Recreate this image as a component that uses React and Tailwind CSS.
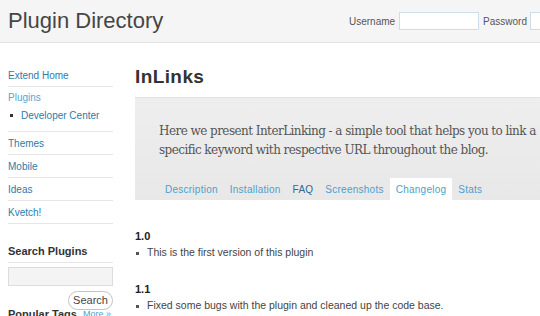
const navItems = ['Themes', 'Mobile', 'Ideas', 'Kvetch!'];

const tabs = [
  { label: 'Description', color: 'text-[#4d9fcd]' },
  { label: 'Installation', color: 'text-[#4d9fcd]' },
  { label: 'FAQ', color: 'text-[#2a6a94]' },
  { label: 'Screenshots', color: 'text-[#4d9fcd]' },
  { label: 'Changelog', color: 'text-[#4d9fcd]', active: true },
  { label: 'Stats', color: 'text-[#4d9fcd]' },
];

const changelog = [
  { version: '1.0', notes: ['This is the first version of this plugin'] },
  { version: '1.1', notes: ['Fixed some bugs with the plugin and cleaned up the code base.'] },
];

const App = () => {
  return (
    <div className="w-[540px] h-[316px] overflow-hidden bg-white font-['Liberation_Sans',Arial,sans-serif]">
      <div className="w-[640px]">
        {/* Header */}
        <div className="h-[43px] bg-[#f5f5f5] border-b border-[#e3e3e3] flex items-center justify-between pl-2 pr-[30px]">
          <h1 className="text-[22px] leading-none text-[#464646] mb-[1px]">Plugin Directory</h1>
          <div className="flex items-center text-[10px] text-[#555]">
            <span className="mr-1">Username</span>
            <input className="w-[80px] h-[18px] border border-[#cfdceb] bg-white mr-1" />
            <span className="mr-[3px]">Password</span>
            <input className="w-[80px] h-[18px] border border-[#cfdceb] bg-white" />
          </div>
        </div>

        <div className="flex pl-2">
          {/* Sidebar */}
          <div className="w-[105px] pt-[21px] text-[10px]">
            <div className="h-[23px] flex items-center border-b border-[#e6e6e6] text-[#2b7bab]">Extend Home</div>
            <div className="border-b border-[#e6e6e6] pb-[9px]">
              <div className="h-[21px] flex items-center text-[#5aa5d2]">Plugins</div>
              <div className="h-[14px] flex items-center pl-[2px] text-[#2b7bab]">
                <span className="w-[3px] h-[3px] bg-[#333] mr-[8px]"></span>
                Developer Center
              </div>
            </div>
            {navItems.map((item) => (
              <div key={item} className="h-[23px] flex items-center border-b border-[#e6e6e6] text-[#2b7bab]">
                {item}
              </div>
            ))}

            <div className="mt-[16px] h-[23px] flex items-center border-b border-[#e6e6e6] text-[11px] font-bold text-[#333]">
              Search Plugins
            </div>
            <input className="mt-[4px] w-[105px] h-[19px] border border-[#dcdcdc] bg-[#f4f4f4] block" />
            <div className="flex justify-end mt-[5px]">
              <button className="w-[45px] h-[19px] rounded-full border border-[#c4c4c4] bg-white text-[11px] text-[#444] leading-none">
                Search
              </button>
            </div>
            <div className="flex items-center justify-between -mt-[4px] pr-[2px]">
              <span className="text-[11px] font-bold text-[#333]">Popular Tags</span>
              <span className="text-[9px] text-[#4d9fcd]">More »</span>
            </div>
          </div>

          {/* Main */}
          <div className="ml-[22px] flex-1">
            <h2 className="mt-[23px] h-[22px] leading-[22px] text-[19px] font-bold text-[#333] tracking-[0.4px]">InLinks</h2>
            <div className="mt-[9px] bg-gradient-to-b from-[#eeeeee] to-[#e8e8e8] border-t border-[#e2e2e2] pt-[24px] pl-[24px]">
              <p className="text-[12px] leading-[19px] text-[#555] font-['DejaVu_Serif',serif] w-[400px] tracking-[-0.55px]">
                Here we present InterLinking - a simple tool that helps you to link a specific keyword with respective URL throughout the blog.
              </p>
              <div className="flex mt-[18px]">
                {tabs.map((tab) => (
                  <div
                    key={tab.label}
                    className={`h-[22px] px-[6px] flex items-center text-[10px] tracking-[0.25px] ${tab.color} ${
                      tab.active ? 'bg-white' : ''
                    }`}
                  >
                    {tab.label}
                  </div>
                ))}
              </div>
            </div>

            <div className="pt-[29px]">
              {changelog.map((entry, i) => (
                <div key={entry.version} className={i > 0 ? 'mt-[22px]' : ''}>
                  <h4 className="text-[11px] leading-[14px] font-bold text-[#222]">{entry.version}</h4>
                  <ul className="mt-[3px]">
                    {entry.notes.map((note) => (
                      <li key={note} className="flex items-center h-[14px] text-[10.5px] text-[#444]">
                        <span className="w-[3px] h-[3px] bg-[#555] ml-[1px] mr-[8px]"></span>
                        {note}
                      </li>
                    ))}
                  </ul>
                </div>
              ))}
            </div>
          </div>
        </div>
      </div>
    </div>
  );
};

export default App;
